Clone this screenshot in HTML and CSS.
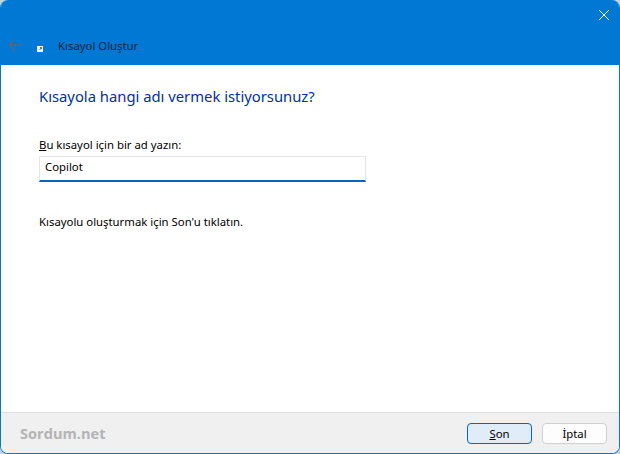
FILE: index.html
```html
<!DOCTYPE html>
<html lang="tr">
<head>
  <meta charset="UTF-8">
  <meta name="viewport" content="width=device-width, initial-scale=1.0">
  <title>Kısayol Oluştur</title>
  <link rel="stylesheet" href="styles.css">
</head>
<body>
  <div class="window">
    <header class="titlebar">
      <div class="close-row">
        <svg class="close-icon" width="10" height="10" viewBox="0 0 10 10"><path d="M0 0L10 10M10 0L0 10" stroke="#fff" stroke-width="1" fill="none"/></svg>
      </div>
      <div class="title-row">
        <svg class="back-icon" width="14" height="14" viewBox="0 0 14 14"><path d="M14 7H1.5M7 1.5L1.5 7L7 12.5" stroke="#56697c" stroke-width="1.7" fill="none"/></svg>
        <svg class="app-icon" width="6" height="6" viewBox="0 0 6 6"><rect width="6" height="6" fill="#f4f7fb"/><rect x="3" y="1" width="2" height="2" fill="#2f86d8"/><rect x="2" y="3" width="2" height="1" fill="#8fbde8"/></svg>
        <span class="title">Kısayol Oluştur</span>
      </div>
    </header>

    <main class="content">
      <h1 class="heading">Kısayola hangi adı vermek istiyorsunuz?</h1>
      <label class="field-label" for="shortcutName"><u>B</u>u kısayol için bir ad yazın:</label>
      <input class="field-input" type="text" id="shortcutName" value="Copilot">
      <p class="hint">Kısayolu oluşturmak için Son'u tıklatın.</p>
    </main>

    <footer class="footer">
      <span class="watermark">Sordum.net</span>
      <div class="buttons">
        <button class="btn btn-primary"><u>S</u>on</button>
        <button class="btn">İptal</button>
      </div>
    </footer>
  </div>
</body>
</html>
```

FILE: styles.css
```css
html, body {
  margin: 0;
  padding: 0;
  height: 100%;
  background: #c9d3da;
}
body {
  font-family: "Noto Sans", "Open Sans", sans-serif;
  font-size: 11.35px;
  color: #000;
  overflow: hidden;
}
.window {
  box-sizing: border-box;
  width: 620px;
  height: 454px;
  display: flex;
  flex-direction: column;
  background: #fff;
  border-left: 1px solid #0078d4;
  border-right: 1px solid #0078d4;
  border-bottom: 1px solid #0078d4;
  border-radius: 8px;
  overflow: hidden;
}

/* title bar */
.titlebar {
  height: 65px;
  margin: 0 -1px;
  background: #0078d4;
  flex-shrink: 0;
}
.close-row {
  display: flex;
  justify-content: flex-end;
  padding: 10px 11px 0 0;
  height: 20px;
}
.close-icon {
  display: block;
}
.title-row {
  display: flex;
  align-items: flex-start;
  padding: 8px 0 0 8px;
}
.back-icon {
  margin-right: 15px;
}
.app-icon {
  margin: 8px 15px 0 0;
}
.title {
  color: #06243f;
}

/* body */
.content {
  flex: 1;
  padding: 0 0 0 38px;
}
.heading {
  margin: 20px 0 0;
  font-size: 14.8px;
  font-weight: 400;
  line-height: 22px;
  color: #003399;
}
.field-label {
  display: block;
  margin-top: 30px;
  line-height: 16px;
}
.field-input {
  display: block;
  box-sizing: border-box;
  width: 327px;
  height: 26px;
  margin-top: 3px;
  padding: 0 5px 4px;
  border: 1px solid #e6e6e6;
  border-bottom: 2px solid #0067c0;
  outline: none;
  font: inherit;
  color: #000;
  background: #fff;
}
.hint {
  margin: 32px 0 0;
  line-height: 16px;
}

/* footer */
.footer {
  height: 41px;
  flex-shrink: 0;
  display: flex;
  align-items: center;
  justify-content: space-between;
  box-sizing: border-box;
  padding: 0 12px 0 19px;
  background: #f0f0f0;
  border-top: 1px solid #dfdfdf;
}
.watermark {
  font-family: "Open Sans", sans-serif;
  font-size: 14.6px;
  font-weight: 700;
  color: #b4b4b4;
}
.buttons {
  display: flex;
  gap: 10px;
}
.btn {
  box-sizing: border-box;
  width: 65px;
  height: 21px;
  padding: 0;
  border: 1px solid #d0d0d0;
  border-radius: 4px;
  background: #fdfdfd;
  font: inherit;
  color: #000;
}
.btn-primary {
  border-color: #0067c0;
  background: #e0ecf8;
}
```
